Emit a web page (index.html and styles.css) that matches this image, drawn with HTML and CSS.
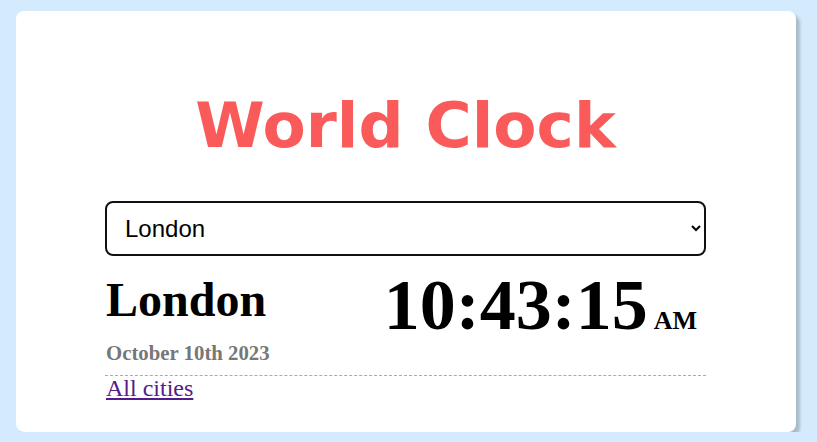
FILE: index.html
```html
<!DOCTYPE html>
<html>
<head>
<meta charset="utf-8">
<link rel="stylesheet" href="styles.css">
</head>
<body>
<div class="card">
  <h1 class="title">World Clock</h1>
  <div class="content">
    <select class="city-select">
      <option>London</option>
    </select>
    <div class="city-row">
      <div class="city-info">
        <h2 class="city-name">London</h2>
        <div class="city-date">October 10th 2023</div>
      </div>
      <div class="city-time">10:43:15<span class="ampm">AM</span></div>
    </div>
    <a class="all-link" href="#">All cities</a>
  </div>
</div>
</body>
</html>
```
FILE: styles.css
```css
html, body {
  margin: 0;
  padding: 0;
}
body {
  background: #d4ebfd;
  font-family: "Liberation Serif", "Times New Roman", serif;
  padding: 11px 0 0 16px;
}
.card {
  width: 780px;
  height: 421px;
  box-sizing: border-box;
  background: #fff;
  border-radius: 8px;
  box-shadow: 4px 4px 3px rgba(0, 0, 0, 0.2);
  padding: 70px 90px 0 89px;
}
.title {
  margin: 0 0 30px 0;
  text-align: center;
  font-family: "DejaVu Sans", Verdana, sans-serif;
  font-weight: bold;
  font-size: 63px;
  line-height: 90px;
  color: #fa5a5a;
}
.content {
  width: 601px;
}
.city-select {
  display: block;
  width: 601px;
  height: 55px;
  border: 2px solid #111;
  border-radius: 8px;
  background: #fff;
  font-family: "Liberation Sans", Arial, sans-serif;
  font-size: 24px;
  padding: 0 14px;
  color: #000;
}
.city-row {
  display: flex;
  justify-content: space-between;
  align-items: flex-start;
  padding: 18px 0 10px 1px;
  border-bottom: 1px dashed #aaa;
}
.city-name {
  margin: 0;
  font-size: 48px;
  line-height: 52px;
  font-weight: bold;
}
.city-date {
  margin-top: 15px;
  font-size: 20.8px;
  line-height: 24px;
  font-weight: bold;
  color: #777;
}
.city-time {
  font-size: 72px;
  line-height: 62px;
  font-weight: bold;
  padding-right: 9px;
}
.ampm {
  font-size: 26px;
  margin-left: 6px;
}
.all-link {
  display: inline-block;
  margin-left: 1px;
  font-size: 24px;
  line-height: 24px;
  color: #551a8b;
}
```
